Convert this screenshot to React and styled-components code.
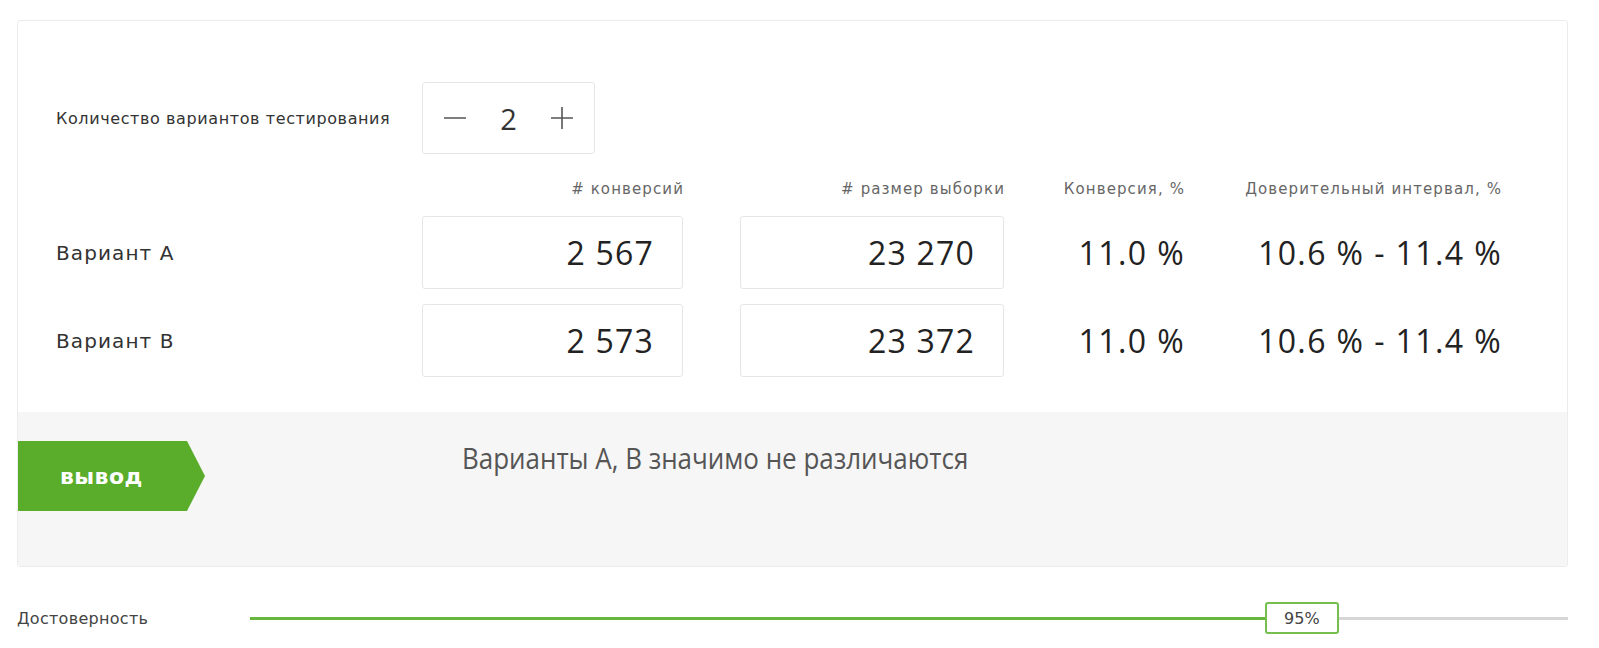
import React from "react";
import styled, { createGlobalStyle } from "styled-components";

const GlobalStyle = createGlobalStyle`
  html, body {
    margin: 0;
    background: #fff;
    font-family: "Open Sans", "Noto Sans", sans-serif;
    color: #333;
  }
`;

const wide = `"DejaVu Sans", "Open Sans", sans-serif`;

const Page = styled.div`
  padding: 20px 31px 0 17px;
`;

const Card = styled.section`
  border: 1px solid #ececec;
  border-radius: 3px;
  background: #fff;
  overflow: hidden;
`;

const Grid = styled.div`
  display: grid;
  grid-template-columns: 366px 261px 321px 180px 317px;
  align-items: center;
  padding: 61px 0 35px 38px;
`;

const RowLabel = styled.div`
  font-family: ${wide};
  font-size: ${(p) => (p.small ? "16px" : "20px")};
  letter-spacing: ${(p) => (p.small ? "0.6px" : "1.1px")};
  color: #333;
`;

const Stepper = styled.div`
  grid-column: 2 / span 2;
  width: 173px;
  height: 72px;
  box-sizing: border-box;
  border: 1px solid #e6e6e6;
  border-radius: 3px;
  display: flex;
  align-items: center;
  justify-content: space-between;
  padding: 0 20px;
`;

const StepButton = styled.button`
  border: 0;
  background: none;
  padding: 0;
  width: 24px;
  height: 24px;
  display: flex;
  align-items: center;
  justify-content: center;
  cursor: pointer;
`;

const StepValue = styled.span`
  font-size: 29px;
  color: #333;
`;

const HeadCell = styled.div`
  grid-column: ${(p) => p.col};
  text-align: right;
  font-family: ${wide};
  font-size: 15px;
  letter-spacing: 1.1px;
  margin-right: -1px;
  color: #666;
  margin-top: 25px;
  margin-bottom: 17px;
  line-height: 20px;
`;

const Spacer = styled.div`
  grid-column: 1;
`;

const NumberBox = styled.div`
  justify-self: end;
  width: ${(p) => p.w}px;
  height: 73px;
  box-sizing: border-box;
  border: 1px solid #e6e6e6;
  border-radius: 3px;
  display: flex;
  align-items: center;
  justify-content: flex-end;
  padding-right: 28px;
  font-size: 32px;
  letter-spacing: 1.2px;
  color: #222;
  margin-bottom: ${(p) => (p.last ? 0 : 15)}px;
`;

const Value = styled.div`
  text-align: right;
  font-size: 32px;
  letter-spacing: 1.4px;
  margin-right: -1px;
  color: #222;
  margin-bottom: ${(p) => (p.last ? 0 : 15)}px;
`;

const Conclusion = styled.div`
  background: #f6f6f6;
  height: 154px;
  display: flex;
  align-items: flex-start;
  padding-top: 29px;
  box-sizing: border-box;
`;

const Tag = styled.div`
  flex: none;
  width: 187px;
  height: 70px;
  background: #5aad2b;
  clip-path: polygon(0 0, 169px 0, 187px 50%, 169px 100%, 0 100%);
  color: #fff;
  font-family: ${wide};
  font-weight: 700;
  font-size: 22px;
  letter-spacing: 0.4px;
  display: flex;
  align-items: center;
  padding-left: 42px;
  box-sizing: border-box;
`;

const ConclusionText = styled.div`
  margin-left: 257px;
  margin-top: 2px;
  font-size: 30px;
  line-height: 1;
  color: #555;
  white-space: nowrap;
  transform: scaleX(0.865);
  transform-origin: left center;
`;

const SliderRow = styled.div`
  display: flex;
  align-items: center;
  height: 32px;
  margin-top: 35px;
`;

const SliderLabel = styled.div`
  width: 233px;
  flex: none;
  font-family: ${wide};
  font-size: 16px;
  letter-spacing: 0.3px;
  color: #444;
`;

const Track = styled.div`
  position: relative;
  flex: 1;
  height: 3px;
  background: #d6d6d6;
`;

const Fill = styled.div`
  height: 100%;
  background: #67b63d;
`;

const Thumb = styled.div`
  position: absolute;
  top: 50%;
  transform: translateY(-50%);
  width: 74px;
  height: 32px;
  box-sizing: border-box;
  border: 2px solid #74bf4d;
  border-radius: 3px;
  background: #fff;
  display: flex;
  align-items: center;
  justify-content: center;
  font-family: ${wide};
  font-size: 16px;
  color: #444;
`;

const Minus = () => (
  <svg width="24" height="24" viewBox="0 0 24 24">
    <line x1="1" y1="12" x2="23" y2="12" stroke="#555" strokeWidth="1.6" />
  </svg>
);

const Plus = () => (
  <svg width="24" height="24" viewBox="0 0 24 24">
    <line x1="1" y1="12" x2="23" y2="12" stroke="#555" strokeWidth="1.6" />
    <line x1="12" y1="1" x2="12" y2="23" stroke="#555" strokeWidth="1.6" />
  </svg>
);

const variants = [
  { name: "Вариант А", conv: "2 567", size: "23 270", rate: "11.0 %", ci: "10.6 % - 11.4 %" },
  { name: "Вариант В", conv: "2 573", size: "23 372", rate: "11.0 %", ci: "10.6 % - 11.4 %" },
];

const App = () => {
  const thumbPos = 77;
  return (
    <Page>
      <GlobalStyle />
      <Card>
        <Grid>
          <RowLabel small>Количество вариантов тестирования</RowLabel>
          <Stepper>
            <StepButton aria-label="minus">
              <Minus />
            </StepButton>
            <StepValue>2</StepValue>
            <StepButton aria-label="plus">
              <Plus />
            </StepButton>
          </Stepper>
          <Spacer />
          <Spacer />

          <Spacer />
          <HeadCell col={2}># конверсий</HeadCell>
          <HeadCell col={3}># размер выборки</HeadCell>
          <HeadCell col={4}>Конверсия, %</HeadCell>
          <HeadCell col={5}>Доверительный интервал, %</HeadCell>

          {variants.map((v, i) => {
            const last = i === variants.length - 1;
            return (
              <React.Fragment key={v.name}>
                <RowLabel style={{ marginBottom: last ? 0 : 15 }}>{v.name}</RowLabel>
                <NumberBox w={261} last={last}>{v.conv}</NumberBox>
                <NumberBox w={264} last={last}>{v.size}</NumberBox>
                <Value last={last}>{v.rate}</Value>
                <Value last={last}>{v.ci}</Value>
              </React.Fragment>
            );
          })}
        </Grid>
        <Conclusion>
          <Tag>вывод</Tag>
          <ConclusionText>Варианты А, В значимо не различаются</ConclusionText>
        </Conclusion>
      </Card>
      <SliderRow>
        <SliderLabel>Достоверность</SliderLabel>
        <Track>
          <Fill style={{ width: `${thumbPos}%` }} />
          <Thumb style={{ left: `${thumbPos}%` }}>95%</Thumb>
        </Track>
      </SliderRow>
    </Page>
  );
};

export default App;
